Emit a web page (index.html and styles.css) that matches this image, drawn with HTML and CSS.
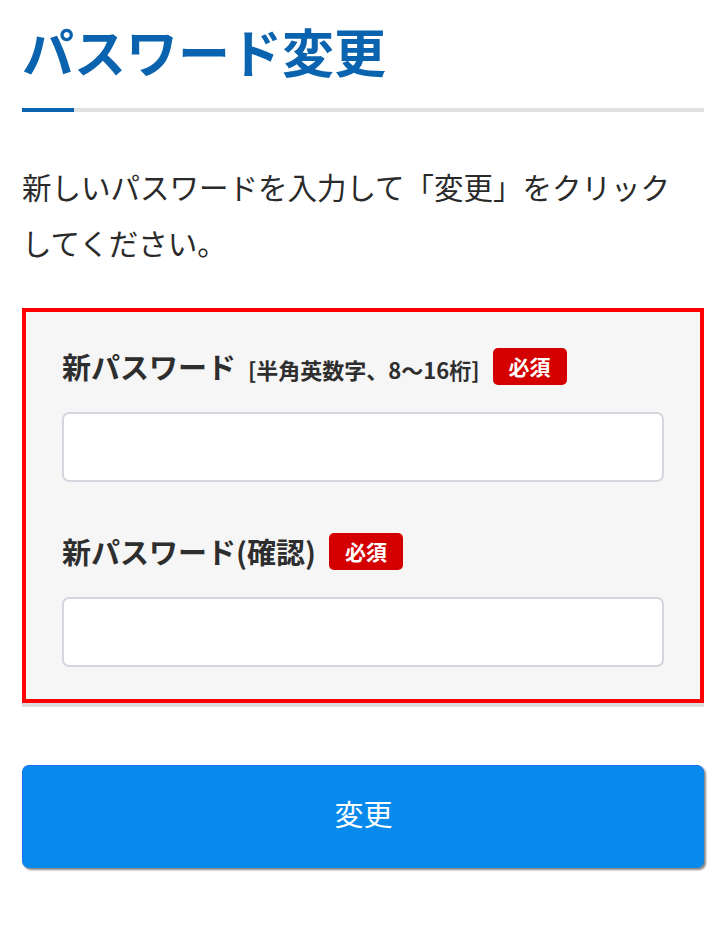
FILE: index.html
```html
<!DOCTYPE html>
<html lang="ja">
<head>
<meta charset="utf-8">
<title>パスワード変更</title>
<link rel="stylesheet" href="styles.css">
</head>
<body>
<main class="page">
  <h1 class="title">パスワード変更</h1>
  <div class="rule"><span class="rule-accent"></span><span class="rule-rest"></span></div>
  <p class="lead">新しいパスワードを入力して「変更」をクリック<br>してください。</p>
  <div class="form-wrap">
    <div class="form-box">
      <div class="field">
        <div class="label-row">
          <span class="label">新パスワード</span>
          <span class="note">[半角英数字、8～16桁]</span>
          <span class="badge">必須</span>
        </div>
        <input class="input" type="password">
      </div>
      <div class="field">
        <div class="label-row">
          <span class="label">新パスワード(確認)</span>
          <span class="badge">必須</span>
        </div>
        <input class="input" type="password">
      </div>
    </div>
  </div>
  <button class="submit" type="button">変更</button>
</main>
</body>
</html>
```
FILE: styles.css
```css
html, body {
  margin: 0;
  padding: 0;
  background: #ffffff;
}
body {
  font-family: "Noto Sans CJK JP", "Noto Sans", sans-serif;
  color: #333333;
}
.page {
  padding: 19px 22px 40px 22px;
}
.title {
  margin: 0;
  font-size: 52px;
  line-height: 64px;
  font-weight: 700;
  color: #0a63ae;
  letter-spacing: 0;
}
.rule {
  display: flex;
  height: 4px;
  margin-top: 25px;
}
.rule-accent {
  width: 52px;
  background: #0a63ae;
}
.rule-rest {
  flex: 1;
  background: #e1e1e1;
}
.lead {
  margin: 46px 0 0 0;
  font-size: 29.5px;
  line-height: 56px;
  font-weight: 400;
  color: #2a2a2a;
}
.form-wrap {
  margin-top: 38px;
  border-bottom: 4px solid #dddddd;
}
.form-box {
  border: 4px solid #ff0000;
  background: #f6f6f6;
  padding: 34px 36px 32px 36px;
  display: flex;
  flex-direction: column;
  gap: 49px;
}
.field {
  display: flex;
  flex-direction: column;
  gap: 26px;
}
.label-row {
  display: flex;
  align-items: center;
  height: 40px;
}
.label {
  font-size: 29px;
  font-weight: 700;
  color: #2e2e2e;
}
.note {
  font-size: 22px;
  font-weight: 700;
  color: #2e2e2e;
  margin-left: 12px;
  padding-top: 6px;
}
.badge {
  margin-left: 13px;
  height: 37px;
  line-height: 37px;
  padding: 0 16px;
  background: #d40000;
  color: #ffffff;
  font-size: 21px;
  font-weight: 700;
  border-radius: 5px;
}
.input {
  box-sizing: border-box;
  height: 70px;
  width: 100%;
  margin: 0;
  background: #ffffff;
  border: 2px solid #d3d7dd;
  border-radius: 7px;
  font-size: 24px;
}
.submit {
  display: block;
  box-sizing: border-box;
  width: 100%;
  height: 103px;
  margin-top: 58px;
  padding: 0 0 8px 0;
  background: #078aeb;
  border: none;
  border-top: 1px solid #1b6ff0;
  border-left: 1px solid #1b6ff0;
  border-radius: 7px;
  box-shadow: 2px 2px 2px #8a8a8a;
  color: #ffffff;
  font-family: "Noto Sans CJK JP", "Noto Sans", sans-serif;
  font-size: 29px;
  font-weight: 400;
}
```
